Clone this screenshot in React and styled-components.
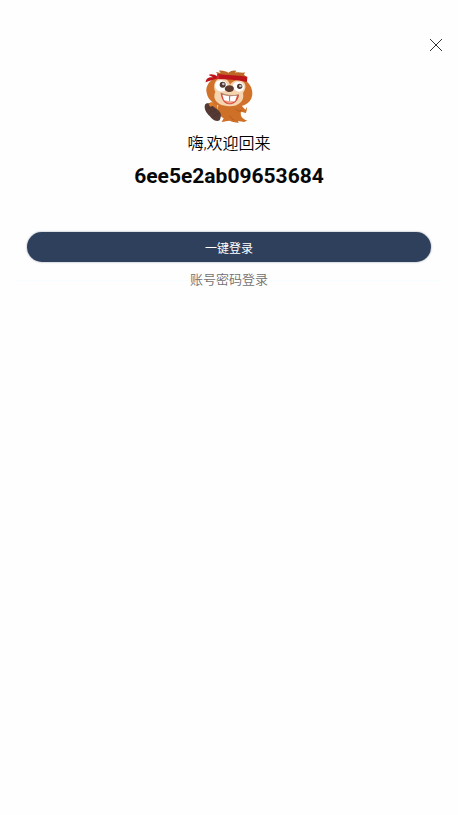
import React from "react";
import styled, { createGlobalStyle } from "styled-components";

const GlobalStyle = createGlobalStyle`
  *, *::before, *::after { box-sizing: border-box; }
  body {
    margin: 0;
    background: #fefefe;
    color: #111;
    font-family: Roboto, "Noto Sans CJK SC", sans-serif;
  }
`;

const Page = styled.main`
  display: flex;
  flex-direction: column;
  min-height: 100vh;
  padding: 36px 12px 0;
`;

const TopBar = styled.header`
  display: flex;
  justify-content: flex-end;
`;

const CloseButton = styled.button`
  display: flex;
  padding: 2px;
  margin-right: 1px;
  border: 0;
  background: none;
  cursor: pointer;
`;

const Profile = styled.section`
  display: flex;
  flex-direction: column;
  align-items: center;
  margin-top: 10px;
`;

const Greeting = styled.p`
  margin: 4px 0 0;
  color: #000;
  font-size: 16px;
  line-height: 24px;
  font-weight: 350;
`;

const UserName = styled.h1`
  margin: 6px 0 0;
  font-size: 21px;
  line-height: 28px;
  font-weight: 700;
  color: #080808;
`;

const Actions = styled.section`
  display: flex;
  flex-direction: column;
  margin-top: 42px;
`;

const LoginButton = styled.button`
  height: 30px;
  margin: 0 15px;
  padding: 4px 0 0;
  border: 0;
  border-radius: 15px;
  background: #2f405c;
  box-shadow: 0 0 2px #2f405c99;
  color: #fff;
  font: inherit;
  font-size: 12px;
  line-height: 18px;
  cursor: pointer;
`;

const AlternateRow = styled.div`
  display: flex;
  align-items: center;
  margin: 8px 5px 0;

  &::before,
  &::after {
    content: "";
    flex: 1;
    height: 1px;
    background: #f6fdff;
  }
`;

const PasswordLink = styled.a`
  color: #707070;
  font-size: 13px;
  line-height: 20px;
  font-weight: 350;
  text-decoration: none;
`;

function CloseIcon() {
  return (
    <svg width="14" height="14" viewBox="0 0 14 14" aria-hidden="true">
      <path d="M1 1 13 13M13 1 1 13" stroke="#333" strokeWidth="1" fill="none" />
    </svg>
  );
}

function Mascot() {
  return (
    <svg width="60" height="64" viewBox="2 0 180 192" role="img" aria-label="Beaver">
      <path d="M59 34 53 24 67 27Q62 20 62 20C74 19 84 23 90 26Q101 17 114 20L110 26C122 23 133 28 140 25L137 32 146 40 145 48 60 38Z" fill="#bd6726" />
      <path d="M61 120C54 143 62 155 76 163L70 174C83 174 91 167 101 173L121 177 119 171 138 174 147 169C130 166 125 153 128 143L143 147Q146 137 146 128L141 137 128 123Z" fill="#ce7028" />
      <path d="M56 118C37 110 24 120 21 130L43 147 61 157Z" fill="#d7792e" />
      <path d="M46 44C30 53 21 70 25 86C28 107 48 123 74 128C105 135 141 128 155 110C168 93 162 68 147 54L134 40 65 37Z" fill="#d1722a" />
      <path d="M51 84C44 69 47 49 64 43C80 39 92 50 95 62C104 47 127 44 138 57C146 69 138 80 134 88C138 104 130 119 110 125C82 130 51 122 48 99Q47 90 51 84Z" fill="#f5d4af" />
      <path d="M51 70C47 55 60 46 74 50C86 53 91 67 85 76C77 87 55 84 51 70Z" fill="#fff" />
      <path d="M107 58C116 48 134 55 137 67C138 81 125 87 114 81C103 75 101 64 107 58Z" fill="#fff" />
      <circle cx="73" cy="62" r="9" fill="#4d3731" />
      <circle cx="124" cy="67" r="8" fill="#4d3731" />
      <circle cx="75" cy="60" r="4" fill="#c5bfc0" />
      <circle cx="126" cy="66" r="4" fill="#c5bfc0" />
      <path d="M80 71C84 62 101 61 106 70C109 79 100 85 94 84C85 84 77 78 80 71Z" fill="#5c3a2d" />
      <path d="M67 87C80 97 108 99 122 92C120 111 107 121 93 121C79 120 69 108 67 87Z" fill="#d84e42" />
      <path d="M78 108C91 102 102 103 110 109C101 122 86 121 78 108Z" fill="#f19a82" />
      <path d="M72 92 93 97V112L77 109Z" fill="#fff" />
      <path d="M95 97 116 95 110 112 95 112Z" fill="#fff" />
      <path d="M67 87Q94 99 122 92M94 97V111" fill="none" stroke="#8e6754" strokeWidth="2" />
      <path d="M57 30C84 34 116 33 147 38L146 54C116 47 86 46 55 45Z" fill="#bd131b" />
      <path d="M58 38C48 30 36 29 31 33L44 40C32 38 22 44 22 55C32 51 47 47 59 43Z" fill="#bd131b" />
      <path d="M57 32 64 34 62 45 54 44Z" fill="#d52a2b" />
      <path d="M20 122C27 114 36 120 42 125L59 138C71 148 69 157 64 169C51 175 40 164 34 156C24 147 16 133 20 122Z" fill="#563a34" />
      <path d="M27 126 54 158M38 128 60 153M24 137 45 128M32 148 56 135M43 159 65 146" fill="none" stroke="#402c29" strokeWidth="1" />
      <path d="M31 122 38 115 46 119 43 126 36 128Z" fill="#e07d2a" />
      <path d="M112 136Q122 146 131 139M94 155Q100 166 109 169" fill="none" stroke="#a95620" strokeWidth="2" />
    </svg>
  );
}

export default function App() {
  return (
    <>
      <GlobalStyle />
      <Page>
        <TopBar>
          <CloseButton type="button" aria-label="关闭">
            <CloseIcon />
          </CloseButton>
        </TopBar>
        <Profile>
          <Mascot />
          <Greeting>嗨,欢迎回来</Greeting>
          <UserName>6ee5e2ab09653684</UserName>
        </Profile>
        <Actions>
          <LoginButton type="button">一键登录</LoginButton>
          <AlternateRow>
            <PasswordLink href="#password">账号密码登录</PasswordLink>
          </AlternateRow>
        </Actions>
      </Page>
    </>
  );
}
